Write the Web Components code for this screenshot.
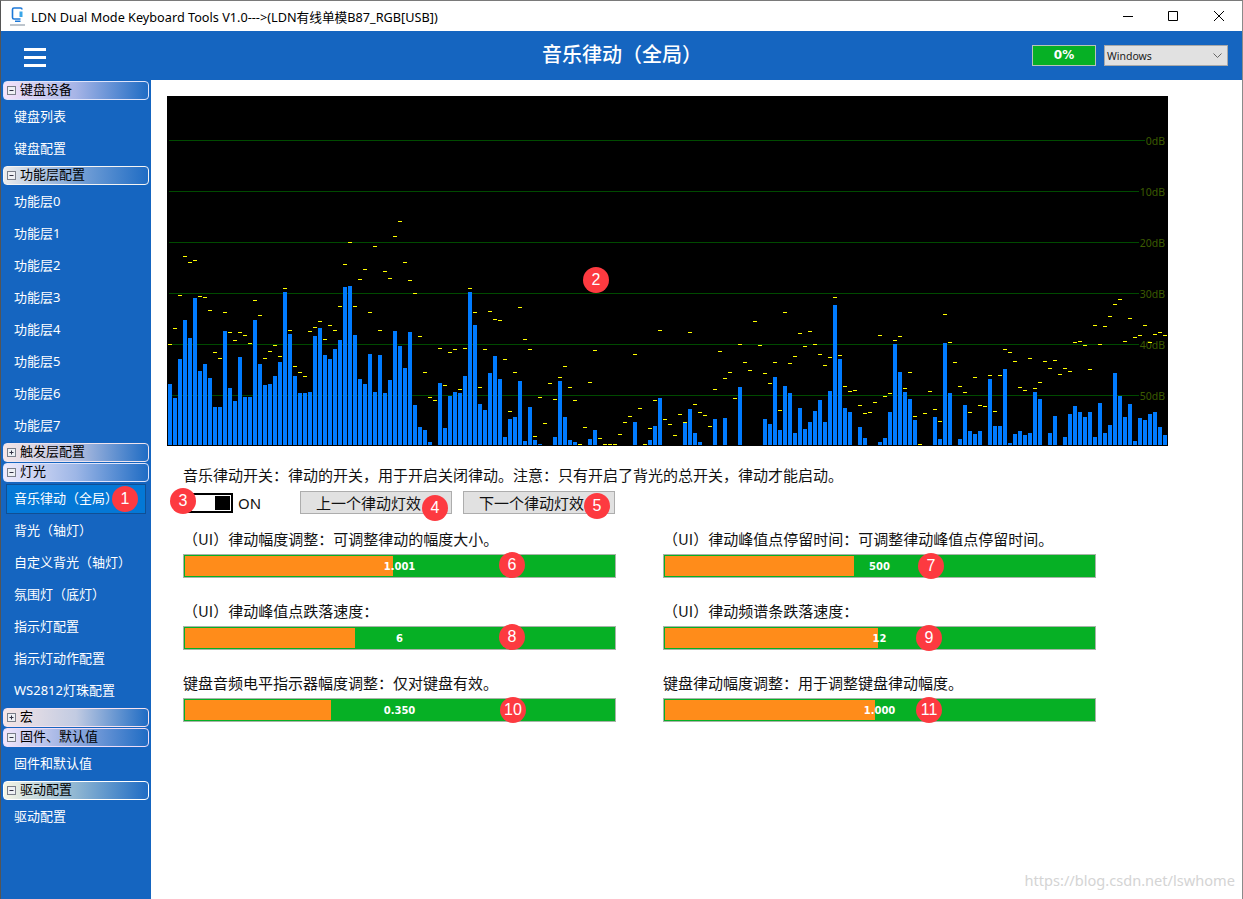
<!DOCTYPE html>
<html lang="zh-CN">
<head>
<meta charset="utf-8">
<title>LDN Dual Mode Keyboard Tools</title>
<style>
    html, body { margin: 0; padding: 0; background: #fff; overflow: hidden; }
</style>
</head>
<body>
<ldn-app>
    <ldn-titlebar slot="titlebar" text="LDN Dual Mode Keyboard Tools V1.0--->(LDN有线单模B87_RGB[USB])"></ldn-titlebar>
    <ldn-header slot="header" text="音乐律动（全局）" progress="0%" mode="Windows"></ldn-header>
    <ldn-sidebar slot="sidebar">
        <ldn-nav-group text="键盘设备" first from="#f6e4fb" mid="#a6b4e6" edge="#dfe4fb"></ldn-nav-group>
        <ldn-nav-item>键盘列表</ldn-nav-item>
        <ldn-nav-item>键盘配置</ldn-nav-item>
        <ldn-nav-group text="功能层配置" from="#ececec" mid="#7ba4d8" edge="#f4f4f4"></ldn-nav-group>
        <ldn-nav-item>功能层0</ldn-nav-item>
        <ldn-nav-item>功能层1</ldn-nav-item>
        <ldn-nav-item>功能层2</ldn-nav-item>
        <ldn-nav-item>功能层3</ldn-nav-item>
        <ldn-nav-item>功能层4</ldn-nav-item>
        <ldn-nav-item>功能层5</ldn-nav-item>
        <ldn-nav-item>功能层6</ldn-nav-item>
        <ldn-nav-item>功能层7</ldn-nav-item>
        <ldn-nav-group text="触发层配置" closed from="#f6e6e6" mid="#b4bfe0" edge="#efe4ee"></ldn-nav-group>
        <ldn-nav-group text="灯光" tight from="#efeafc" mid="#9db6e6" edge="#dfe4fb"></ldn-nav-group>
        <ldn-nav-item selected>音乐律动（全局）</ldn-nav-item>
        <ldn-nav-item>背光（轴灯）</ldn-nav-item>
        <ldn-nav-item>自定义背光（轴灯）</ldn-nav-item>
        <ldn-nav-item>氛围灯（底灯）</ldn-nav-item>
        <ldn-nav-item>指示灯配置</ldn-nav-item>
        <ldn-nav-item>指示灯动作配置</ldn-nav-item>
        <ldn-nav-item>WS2812灯珠配置</ldn-nav-item>
        <ldn-nav-group text="宏" closed from="#f6e6e6" mid="#c2cbe2" edge="#f6e2ee"></ldn-nav-group>
        <ldn-nav-group text="固件、默认值" tight from="#f2e6fc" mid="#8fa9de" edge="#ecdcf8"></ldn-nav-group>
        <ldn-nav-item>固件和默认值</ldn-nav-item>
        <ldn-nav-group text="驱动配置" from="#f6f6e6" mid="#8fb6d2" edge="#ffffff"></ldn-nav-group>
        <ldn-nav-item>驱动配置</ldn-nav-item>
    </ldn-sidebar>
    <ldn-music-page slot="main"></ldn-music-page>
</ldn-app>

<script>
class LdnApp extends HTMLElement {
    constructor() {
        super();
        this.attachShadow({ mode: 'open' });
        const badges = [
            [1, 125, 499], [2, 596, 280], [3, 183, 501], [4, 435, 508], [5, 597, 506], [6, 512, 565],
            [7, 931, 566], [8, 512, 637], [9, 929, 638], [10, 513, 710], [11, 929, 710],
        ];
        this.shadowRoot.innerHTML = `
            <style>
                :host {
                    display: block;
                    position: relative;
                    width: 1243px;
                    height: 899px;
                    overflow: hidden;
                    font-family: "Noto Sans", "Noto Sans CJK SC", sans-serif;
                }
                .frame {
                    box-sizing: border-box;
                    width: 100%;
                    height: 100%;
                    display: flex;
                    flex-direction: column;
                    border-top: 1px solid #7a7a7a;
                    border-left: 1px solid #555;
                    border-right: 1px solid #8a8a8a;
                }
                .body {
                    flex: 1;
                    display: flex;
                    min-height: 0;
                }
                .mark {
                    position: absolute;
                    right: 8px;
                    bottom: 9px;
                    font: 14.6px "Noto Sans", sans-serif;
                    color: #d4d4d4;
                }
            </style>
            <div class="frame">
                <slot name="titlebar"></slot>
                <slot name="header"></slot>
                <div class="body">
                    <slot name="sidebar"></slot>
                    <slot name="main"></slot>
                </div>
            </div>
            ${badges.map(b => `<ldn-badge n="${b[0]}" style="left:${b[1] - 13}px;top:${b[2] - 13}px"></ldn-badge>`).join('')}
            <div class="mark">https://blog.csdn.net/lswhome</div>
        `;
    }
}

class LdnBadge extends HTMLElement {
    constructor() {
        super();
        this.attachShadow({ mode: 'open' });
        this.shadowRoot.innerHTML = `
            <style>
                :host {
                    position: absolute;
                    display: flex;
                    align-items: center;
                    justify-content: center;
                    width: 26px;
                    height: 26px;
                    border-radius: 50%;
                    background: #fd3a40;
                    color: #fff;
                    font: 16px "Liberation Sans", sans-serif;
                }
            </style>
            ${this.getAttribute('n')}
        `;
    }
}

class LdnTitlebar extends HTMLElement {
    constructor() {
        super();
        this.attachShadow({ mode: 'open' });
        this.shadowRoot.innerHTML = `
            <style>
                :host {
                    display: flex;
                    align-items: center;
                    height: 30px;
                    background: #fff;
                    color: #000;
                    font: 12.7px "Noto Sans", "Noto Sans CJK SC", sans-serif;
                }
                .logo { margin: 0 5px 0 8px; flex: none; }
                .text { flex: 1; white-space: nowrap; }
                svg.ctl { flex: none; width: 10px; height: 10px; }
                .min { margin-right: 35px; }
                .max { margin-right: 36px; }
                .close { margin-right: 18px; }
            </style>
            <svg class="logo" width="17" height="24" viewBox="0 0 17 24">
                <path d="M11.5 15H5a1.5 1.5 0 0 1-1.5-1.5V5.5A1.5 1.5 0 0 1 5 4h6.5A1.5 1.5 0 0 1 13 5.500" fill="none" stroke="#1c78d8" stroke-width="1.600"/>
                <path d="M10.500 7.500h3v5.500h-3z" fill="#3aa6e8"/>
                <path d="M6 16.500h5.500v1.500H6z" fill="#1c78d8"/>
                <path d="M1 20.500h15v1H1z" fill="#7a8a9a"/>
            </svg>
            <div class="text">${this.getAttribute('text').replace('>', '&gt;')}</div>
            <svg class="ctl min" viewBox="0 0 10 10"><path d="M0 5.500h10" stroke="#000" fill="none"/></svg>
            <svg class="ctl max" viewBox="0 0 10 10"><path d="M.5.5h9v9h-9z" stroke="#000" fill="none"/></svg>
            <svg class="ctl close" viewBox="0 0 10 10"><path d="M0 0l10 10M10 0L0 10" stroke="#000" fill="none"/></svg>
        `;
    }
}

class LdnHeader extends HTMLElement {
    constructor() {
        super();
        this.attachShadow({ mode: 'open' });
        this.shadowRoot.innerHTML = `
            <style>
                :host {
                    display: flex;
                    align-items: center;
                    height: 49px;
                    background: #1565c0;
                    color: #fff;
                }
                .burger {
                    margin: 4px 0 0 23px;
                    width: 22px;
                    display: flex;
                    flex-direction: column;
                    gap: 5px;
                }
                .burger span { height: 3px; background: #fff; }
                .title {
                    flex: 1;
                    padding: 0 0 4px 166px;
                    text-align: center;
                    font: 500 20px "Noto Sans CJK SC", sans-serif;
                }
                .progress {
                    box-sizing: border-box;
                    width: 64px;
                    height: 21px;
                    background: #06b025;
                    border: 1px solid #b8c4b8;
                    text-align: center;
                    font: bold 12px/19px "DejaVu Sans", sans-serif;
                }
                .mode {
                    box-sizing: border-box;
                    display: flex;
                    align-items: center;
                    justify-content: space-between;
                    width: 124px;
                    height: 21px;
                    margin: 0 14px 0 8px;
                    padding: 0 5px 0 2px;
                    background: #e1e1e1;
                    border: 1px solid #a9a9a9;
                    color: #222;
                    font: 10.500px "Noto Sans", sans-serif;
                }
            </style>
            <div class="burger"><span></span><span></span><span></span></div>
            <div class="title">${this.getAttribute('text')}</div>
            <div class="progress">${this.getAttribute('progress')}</div>
            <div class="mode">${this.getAttribute('mode')}
                <svg width="9" height="6" viewBox="0 0 9 6"><path d="M.5.5l4 4 4-4" fill="none" stroke="#666"/></svg>
            </div>
        `;
    }
}

class LdnSidebar extends HTMLElement {
    constructor() {
        super();
        this.attachShadow({ mode: 'open' });
        this.shadowRoot.innerHTML = `
            <style>
                :host {
                    display: block;
                    flex: none;
                    box-sizing: border-box;
                    width: 150px;
                    padding: 0 2px;
                    background: #1565c0;
                }
            </style>
            <slot></slot>
        `;
    }
}

class LdnNavGroup extends HTMLElement {
    constructor() {
        super();
        this.attachShadow({ mode: 'open' });
        const from = this.getAttribute('from');
        const mid = this.getAttribute('mid');
        const edge = this.getAttribute('edge');
        const top = this.hasAttribute('first') || this.hasAttribute('tight') ? 1 : 2;
        const bar = this.hasAttribute('closed') ? '<path d="M4.5 2.5v4" stroke="#334"/>' : '';
        this.shadowRoot.innerHTML = `
            <style>
                :host {
                    display: flex;
                    align-items: center;
                    box-sizing: border-box;
                    width: 146px;
                    height: 19px;
                    margin-top: ${top}px;
                    padding-left: 3px;
                    border: 1px solid ${edge};
                    border-radius: 4px;
                    background: linear-gradient(90deg, ${from} 0%, ${mid} 50%, #1f6cc4 100%);
                    color: #000;
                    font: 13px/17px "Noto Sans CJK SC", sans-serif;
                }
                svg { flex: none; margin-right: 4px; }
                span { margin-bottom: 4px; }
            </style>
            <svg width="9" height="9" viewBox="0 0 9 9">
                <rect x=".5" y=".5" width="8" height="8" fill="#eef0f4" stroke="#7a7f8a"/>
                <path d="M2.5 4.5h4" stroke="#334"/>${bar}
            </svg>
            <span>${this.getAttribute('text')}</span>
        `;
    }
}

class LdnNavItem extends HTMLElement {
    constructor() {
        super();
        this.attachShadow({ mode: 'open' });
        this.shadowRoot.innerHTML = `
            <style>
                :host {
                    display: block;
                    height: 32px;
                    color: #fff;
                    font: 13px/32px "Noto Sans", "Noto Sans CJK SC", sans-serif;
                    white-space: nowrap;
                }
                div { padding-left: 11px; }
                :host([selected]) {
                    box-sizing: border-box;
                    padding-top: 2px;
                }
                :host([selected]) div {
                    box-sizing: border-box;
                    height: 30px;
                    margin: 0 3px;
                    padding-left: 7px;
                    line-height: 26px;
                    background: #0478d6;
                    border: 1px solid #104f94;
                }
            </style>
            <div><slot></slot></div>
        `;
    }
}

const BAR_TOPS = [
    312,354,237,120,174,54,273,252,294,381,381,153,324,363,231,351,351,120,252,315,312,288,246,36,162,288,339,339,336,168,
    144,225,237,207,180,21,18,165,297,312,222,336,225,339,300,153,198,264,156,375,441,450,486,0,309,444,348,336,339,288,36,135,372,390,279,228,297,
    471,417,411,303,483,381,480,492,0,0,
    471,303,411,480,486,0,0,477,450,
    0,0,0,0,0,0,0,
    426,0,0,480,438,354,0,0,0,0,
    429,387,459,486,0,0,417,0,414,0,0,321,0,0,0,0,
    417,432,291,450,318,339,459,384,447,426,393,360,426,333,75,237,
    384,396,0,441,474,0,0,486,474,396,192,276,336,357,420,0,0,0,411,477,189,339,0,477,375,
    453,462,453,0,297,438,438,267,489,462,453,465,459,336,357,0,459,408,0,471,
    402,378,396,411,396,471,369,459,435,279,348,411,372,483,414,420,402,396,441,465,
];

const PEAK_TOPS = [
    193,145,46,-71,-53,-59,49,52,91,217,235,97,157,181,157,166,190,61,106,235,214,196,229,25,151,259,277,289,154,142,
    124,178,136,151,79,-47,-113,79,-2,-32,97,-101,151,-26,-7,-131,-176,-53,1,40,169,277,352,361,205,316,217,208,328,205,25,97,322,208,94,118,121,
    238,394,277,82,178,208,469,352,430,310,358,292,259,322,361,493,442,307,211,475,493,493,493,463,427,
    409,223,385,493,445,361,151,418,433,466,403,427,157,373,397,406,439,328,214,295,277,355,193,247,271,
    124,196,280,310,247,391,97,250,229,160,199,154,193,223,256,232,
    52,226,319,334,331,376,400,397,367,166,349,340,181,169,325,277,409,493,400,334,388,424,103,187,247,
    319,337,397,292,376,379,286,394,286,208,217,244,322,331,235,325,307,244,265,241,283,265,274,187,184,
    196,268,136,193,139,109,73,58,184,115,172,166,136,187,163,157,166,
];

class LdnSpectrum extends HTMLElement {
    constructor() {
        super();
        this.attachShadow({ mode: 'open' });
        // tops are read from a 3x crop that starts at y=280, the chart starts at y=96
        const toY = z => 184 + Math.round(z / 3);
        const bars = BAR_TOPS.map((z, i) => z
            ? `<rect x="${1 + i * 5}" y="${toY(z)}" width="4" height="${349 - toY(z)}"/>` : '').join('');
        const peaks = PEAK_TOPS.map((z, i) => `<rect x="${1 + i * 5}" y="${toY(z)}" width="4" height="1"/>`).join('');
        const levels = ['0dB', '10dB', '20dB', '30dB', '40dB', '50dB'];
        this.shadowRoot.innerHTML = `
            <style>
                :host {
                    display: block;
                    position: relative;
                    width: 1001px;
                    height: 350px;
                    background: #000;
                }
                .grid {
                    position: absolute;
                    inset: 19px 3px 0 2px;
                }
                .row {
                    display: flex;
                    align-items: center;
                    height: 51px;
                    color: #3d5c00;
                    font: 10.500px "Noto Sans", sans-serif;
                }
                .row i { flex: 1; height: 1px; background: #004a00; margin-right: 1px; }
                svg { position: absolute; left: 0; top: 0; }
                .bars { fill: #007bff; }
                .peaks { fill: #ffff00; }
            </style>
            <div class="grid">
                ${levels.map(l => `<div class="row"><i></i><span>${l}</span></div>`).join('')}
            </div>
            <svg width="1001" height="350">
                <g class="bars">${bars}</g>
                <g class="peaks">${peaks}</g>
            </svg>
        `;
    }
}

class LdnToggle extends HTMLElement {
    constructor() {
        super();
        this.attachShadow({ mode: 'open' });
        this.shadowRoot.innerHTML = `
            <style>
                :host {
                    display: flex;
                    align-items: center;
                    gap: 5px;
                    width: 106px;
                    flex: none;
                    color: #111;
                    font: 15px "Noto Sans", sans-serif;
                }
                .track {
                    box-sizing: border-box;
                    display: flex;
                    justify-content: flex-end;
                    align-items: center;
                    width: 50px;
                    height: 20px;
                    padding-right: 1px;
                    border: 2px solid #000;
                    background: #fff;
                }
                .knob { width: 15px; height: 14px; background: #000; }
            </style>
            <div class="track"><div class="knob"></div></div>
            <span><slot></slot></span>
        `;
    }
}

class LdnButton extends HTMLElement {
    constructor() {
        super();
        this.attachShadow({ mode: 'open' });
        this.shadowRoot.innerHTML = `
            <style>
                :host {
                    display: block;
                    box-sizing: border-box;
                    width: 152px;
                    height: 23px;
                    padding-left: 15px;
                    background: #e1e1e1;
                    border: 1px solid #adadad;
                    color: #111;
                    font: 15px/21px "Noto Sans CJK SC", sans-serif;
                    white-space: nowrap;
                }
            </style>
            <slot></slot>
        `;
    }
}

class LdnSlider extends HTMLElement {
    constructor() {
        super();
        this.attachShadow({ mode: 'open' });
        this.shadowRoot.innerHTML = `
            <style>
                :host { display: block; }
                .label {
                    height: 20px;
                    margin-bottom: 5px;
                    color: #111;
                    font: 15px/20px "Noto Sans CJK SC", sans-serif;
                    white-space: pre;
                }
                .bar {
                    box-sizing: border-box;
                    position: relative;
                    height: 24px;
                    background: #06b025;
                    border: 1px solid #a8b4a8;
                    padding: 1px;
                }
                .fill {
                    height: 100%;
                    width: ${this.getAttribute('fill')}px;
                    background: #ff8c1a;
                }
                .value {
                    position: absolute;
                    inset: 0;
                    text-align: center;
                    color: #fff;
                    font: bold 10px/23px "DejaVu Sans", sans-serif;
                }
            </style>
            <div class="label"><slot></slot></div>
            <div class="bar">
                <div class="fill"></div>
                <div class="value">${this.getAttribute('value')}</div>
            </div>
        `;
    }
}

class LdnMusicPage extends HTMLElement {
    constructor() {
        super();
        this.attachShadow({ mode: 'open' });
        this.shadowRoot.innerHTML = `
            <style>
                :host {
                    display: block;
                    flex: 1;
                    padding: 16px 0 0 16px;
                    background: #fff;
                }
                .form { margin-left: 16px; }
                .info {
                    height: 20px;
                    margin-top: 19px;
                    color: #111;
                    font: 15px/20px "Noto Sans CJK SC", sans-serif;
                    white-space: nowrap;
                }
                .controls {
                    display: flex;
                    align-items: center;
                    gap: 11px;
                    margin-top: 6px;
                }
                .sliders {
                    display: grid;
                    grid-template-columns: 433px 433px;
                    grid-auto-rows: 72px;
                    column-gap: 47px;
                    margin-top: 15px;
                }
            </style>
            <ldn-spectrum></ldn-spectrum>
            <div class="form">
                <div class="info">音乐律动开关：律动的开关，用于开启关闭律动。注意：只有开启了背光的总开关，律动才能启动。</div>
                <div class="controls">
                    <ldn-toggle>ON</ldn-toggle>
                    <ldn-button>上一个律动灯效</ldn-button>
                    <ldn-button>下一个律动灯效</ldn-button>
                </div>
                <div class="sliders">
                    <ldn-slider value="1.001" fill="208">（UI）律动幅度调整：可调整律动的幅度大小。</ldn-slider>
                    <ldn-slider value="500" fill="189">（UI）律动峰值点停留时间：可调整律动峰值点停留时间。</ldn-slider>
                    <ldn-slider value="6" fill="170">（UI）律动峰值点跌落速度：</ldn-slider>
                    <ldn-slider value="12" fill="213">（UI）律动频谱条跌落速度：</ldn-slider>
                    <ldn-slider value="0.350" fill="146">键盘音频电平指示器幅度调整：仅对键盘有效。</ldn-slider>
                    <ldn-slider value="1.000" fill="210">键盘律动幅度调整：用于调整键盘律动幅度。</ldn-slider>
                </div>
            </div>
        `;
    }
}

customElements.define('ldn-badge', LdnBadge);
customElements.define('ldn-titlebar', LdnTitlebar);
customElements.define('ldn-header', LdnHeader);
customElements.define('ldn-sidebar', LdnSidebar);
customElements.define('ldn-nav-group', LdnNavGroup);
customElements.define('ldn-nav-item', LdnNavItem);
customElements.define('ldn-spectrum', LdnSpectrum);
customElements.define('ldn-toggle', LdnToggle);
customElements.define('ldn-button', LdnButton);
customElements.define('ldn-slider', LdnSlider);
customElements.define('ldn-music-page', LdnMusicPage);
customElements.define('ldn-app', LdnApp);
</script>
</body>
</html>
